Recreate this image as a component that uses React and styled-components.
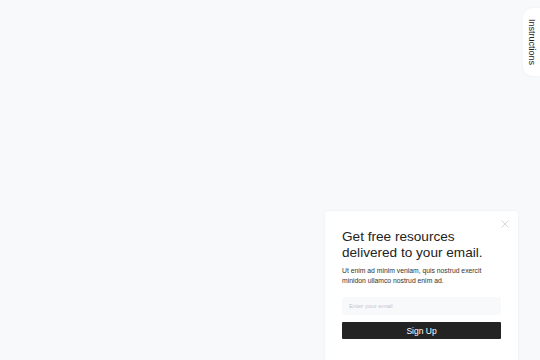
import React from "react";
import styled, { createGlobalStyle } from "styled-components";

const Global = createGlobalStyle`
  html, body { margin: 0; padding: 0; }
  body {
    background: #f8f9fb;
    font-family: "Liberation Sans", Arial, sans-serif;
    width: 540px;
    height: 360px;
    overflow: hidden;
  }
`;

const Page = styled.div`
  position: relative;
  width: 540px;
  height: 360px;
  overflow: hidden;
`;

const Tab = styled.div`
  position: absolute;
  right: 0;
  top: 8px;
  width: 17px;
  height: 68px;
  background: #fff;
  border-radius: 9px 0 0 9px;
  box-shadow: 0 0 3px rgba(0, 0, 0, 0.05);
  display: flex;
  align-items: center;
  justify-content: center;
  writing-mode: vertical-rl;
  font-size: 9px;
  color: #222;
`;

const Card = styled.div`
  position: absolute;
  left: 325px;
  top: 211px;
  width: 193px;
  height: 170px;
  box-sizing: border-box;
  background: #fff;
  border-radius: 4px;
  box-shadow: 0 0 3px rgba(0, 0, 0, 0.06);
  padding: 18px 17px 0 17px;
  display: flex;
  flex-direction: column;
`;

const Close = styled.button`
  position: absolute;
  right: 8px;
  top: 8px;
  width: 10px;
  height: 10px;
  padding: 0;
  border: 0;
  background: none;
  display: flex;
  align-items: center;
  justify-content: center;
`;

const Title = styled.h2`
  margin: 0;
  font-weight: 400;
  font-size: 13.6px;
  line-height: 16px;
  color: #222;
`;

const Text = styled.p`
  margin: 5px 0 0;
  font-size: 6.8px;
  line-height: 10px;
  color: #333;
`;

const Input = styled.input`
  margin-top: 11px;
  height: 18px;
  box-sizing: border-box;
  border: 0;
  border-radius: 2px;
  background: #f8f9fb;
  padding: 0 7px;
  font-family: inherit;
  font-size: 6px;
  outline: none;
  &::placeholder { color: #c4c6ca; }
`;

const Button = styled.button`
  margin-top: 7px;
  height: 17px;
  border: 0;
  border-radius: 1px;
  background: #232323;
  color: #fff;
  font-family: inherit;
  font-size: 8.5px;
  padding: 0;
`;

export default function App() {
  return (
    <Page>
      <Global />
      <Tab>Instructions</Tab>
      <Card>
        <Close aria-label="close">
          <svg width="8" height="8" viewBox="0 0 8 8">
            <path d="M0.5 0.5L7.5 7.5M7.5 0.5L0.5 7.5" stroke="#c9cbce" strokeWidth="0.8" />
          </svg>
        </Close>
        <Title>
          Get free resources
          <br />
          delivered to your email.
        </Title>
        <Text>
          Ut enim ad minim veniam, quis nostrud exercit minidon ullamco nostrud enim ad.
        </Text>
        <Input placeholder="Enter your email" />
        <Button>Sign Up</Button>
      </Card>
    </Page>
  );
}
